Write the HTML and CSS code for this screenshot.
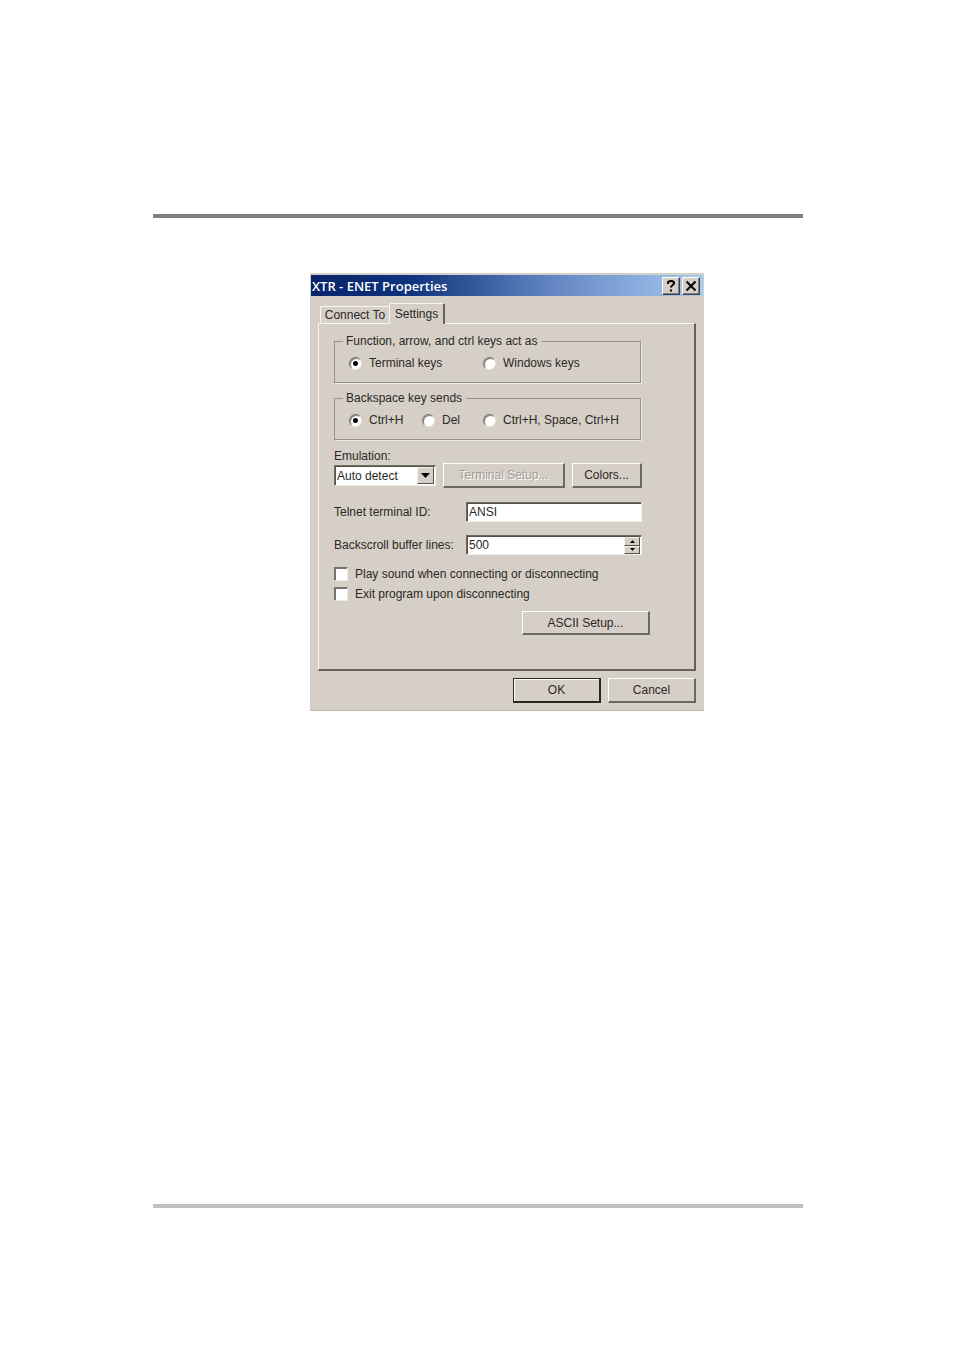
FILE: index.html
```html
<!DOCTYPE html>
<html lang="en">
<head>
	<meta charset="utf-8">
	<title>XTR - ENET Properties</title>
	<link rel="stylesheet" href="styles.css">
</head>
<body>
	<main class="sheet">
		<form class="dialog">
			<header class="titlebar">
				<h1 class="title">XTR - ENET Properties</h1>
				<button type="button" class="title-btn" aria-label="Help">
					<svg width="12" height="12" viewBox="0 0 12 12"><path d="M3 4V3.2C3 1.8 4 1 6 1s3 .8 3 2.2C9 5 6 5 6 7.6M6 9.4v2" fill="none" stroke="#000" stroke-width="2"/></svg>
				</button>
				<button type="button" class="title-btn" aria-label="Close">
					<svg width="12" height="12" viewBox="0 0 12 12"><path d="M1.5 1.500l9 9M10.5 1.500l-9 9" fill="none" stroke="#000" stroke-width="2"/></svg>
				</button>
			</header>

			<nav class="tabs">
				<button type="button" class="tab">Connect To</button>
				<button type="button" class="tab active">Settings</button>
			</nav>

			<section class="panel">
				<fieldset class="group">
					<legend>Function, arrow, and ctrl keys act as</legend>
					<label class="choice wide"><input type="radio" name="keys" checked>Terminal keys</label>
					<label class="choice"><input type="radio" name="keys">Windows keys</label>
				</fieldset>

				<fieldset class="group">
					<legend>Backspace key sends</legend>
					<label class="choice"><input type="radio" name="backspace" checked>Ctrl+H</label>
					<label class="choice"><input type="radio" name="backspace">Del</label>
					<label class="choice"><input type="radio" name="backspace">Ctrl+H, Space, Ctrl+H</label>
				</fieldset>

				<label class="caption" for="emulation">Emulation:</label>
				<div class="emulation">
					<div class="combo">
						<select id="emulation">
							<option>Auto detect</option>
						</select>
						<span class="combo-arrow"><svg width="9" height="5" viewBox="0 0 9 5"><path d="M0 0h9L4.500 5z"/></svg></span>
					</div>
					<button type="button" class="btn setup" disabled>Terminal Setup...</button>
					<button type="button" class="btn colors">Colors...</button>
				</div>

				<div class="field">
					<label for="telnet">Telnet terminal ID:</label>
					<input class="text" id="telnet" type="text" value="ANSI">
				</div>
				<div class="field">
					<label for="lines">Backscroll buffer lines:</label>
					<div class="text spin">
						<input id="lines" type="number" value="500">
						<div class="spin-btns">
							<button type="button" aria-label="More"><svg width="5" height="3" viewBox="0 0 5 3"><path d="M0 3h5L2.500 0z"/></svg></button>
							<button type="button" aria-label="Less"><svg width="5" height="3" viewBox="0 0 5 3"><path d="M0 0h5L2.500 3z"/></svg></button>
						</div>
					</div>
				</div>

				<div class="checks">
					<label class="choice"><input type="checkbox">Play sound when connecting or disconnecting</label>
					<label class="choice"><input type="checkbox">Exit program upon disconnecting</label>
				</div>

				<button type="button" class="btn ascii">ASCII Setup...</button>
			</section>

			<footer class="actions">
				<button type="submit" class="btn default">OK</button>
				<button type="button" class="btn">Cancel</button>
			</footer>
		</form>
	</main>
</body>
</html>
```

FILE: styles.css
```css
* {
	box-sizing: border-box;
	margin: 0;
	padding: 0;
}
body {
	background: #fff;
	color: #2b2825;
	font: 12px/14px "Liberation Sans", Arial, sans-serif;
}
button, input, select {
	font: inherit;
	color: inherit;
}
svg {
	display: block;
}

/* page rules above and below */
.sheet {
	display: flex;
	flex-direction: column;
	align-items: center;
	min-height: 994px;
	margin: 214px 151px 143px 153px;
	padding: 55px 0 0 58px;
	border-top: 4px solid #808080;
	border-bottom: 4px solid #c0c0c0;
}

.dialog {
	width: 394px;
	max-width: 100%;
	padding: 1px 0 7px;
	background: #d6cfc7;
	border: 1px solid #d6cfc7;
	border-bottom-color: #bab5ae;
}
.titlebar {
	display: flex;
	align-items: center;
	height: 21px;
	padding: 0 3px 0 1px;
	background: linear-gradient(to right, #08246b, #0f327c 25%, #6487c4 62%, #a6caf0);
}
.title {
	flex: 1;
	color: #fff;
	font: 600 13px/20px "Open Sans", sans-serif;
}
.title-btn {
	display: flex;
	align-items: center;
	justify-content: center;
	width: 18px;
	height: 18px;
	margin-left: 2px;
	background: #d6cfc7;
	border: 1px solid;
	border-color: #fff #404040 #404040 #fff;
	box-shadow: inset -1px -1px #808080;
}

.tabs {
	display: flex;
	align-items: flex-end;
	height: 27px;
	padding-left: 9px;
}
.tab {
	width: 69px;
	height: 17px;
	background: #d6cfc7;
	border: 1px solid #f8f5f0;
	border-width: 1px 0 0 1px;
	border-radius: 2px 2px 0 0;
}
.tab.active {
	position: relative;
	width: 56px;
	height: 21px;
	margin-bottom: -1px;
	border-right: 2px solid #6a625c;
}

.panel {
	display: flex;
	flex-direction: column;
	margin: 0 7px 7px;
	padding: 10px 52px 34px 15px;
	border: 1px solid #f8f5f0;
	border-right: 2px solid #6a5f59;
	border-bottom: 2px solid #6a5f59;
}
.group {
	display: grid;
	grid-template-columns: 73px 61px 1fr;
	margin: 0 1px 8px 0;
	padding: 8px 0 12px 14px;
	border: 1px solid #99918b;
	box-shadow: 1px 1px #eee9e2;
}
.group legend {
	margin-left: -6px;
	padding: 0 4px 0 3px;
}
.choice {
	display: flex;
	align-items: center;
	gap: 7px;
	white-space: nowrap;
}
.choice.wide {
	grid-column: span 2;
}
input[type="radio"],
input[type="checkbox"] {
	flex: none;
	appearance: none;
	width: 13px;
	height: 13px;
	background: #fff;
	border: 1px solid;
	border-color: #77716c #eee9e2 #eee9e2 #77716c;
}
input[type="radio"] {
	border-radius: 50%;
	box-shadow: inset 1px 1px #8b8580;
}
input[type="checkbox"] {
	width: 14px;
	height: 14px;
	box-shadow: inset 1px 1px #77716c;
}
input[type="radio"]:checked {
	background: radial-gradient(circle, #000 2px, #fff 3px);
}

.caption {
	margin-top: 1px;
}
.emulation {
	display: flex;
	align-items: center;
	margin-bottom: 14px;
}
.combo {
	position: relative;
	width: 102px;
	margin-right: 7px;
}
.combo select {
	display: block;
	appearance: none;
	width: 100%;
	height: 21px;
	padding-left: 2px;
	background: #fff;
	border: 1px solid;
	border-color: #77716c #f4f0ea #f4f0ea #77716c;
	border-radius: 0;
	box-shadow: inset 1px 1px #55504c;
}
.combo-arrow {
	position: absolute;
	top: 2px;
	right: 2px;
	display: flex;
	align-items: center;
	justify-content: center;
	width: 17px;
	height: 17px;
	background: #d6cfc7;
	border: 1px solid;
	border-color: #f4f0ea #55504c #55504c #f4f0ea;
	pointer-events: none;
}
.btn {
	width: 88px;
	height: 25px;
	background: #d6cfc7;
	border: 1px solid #fff;
	border-right: 2px solid #6e6862;
	border-bottom: 2px solid #6e6862;
}
.btn:disabled {
	color: #a39c95;
	text-shadow: 1px 1px #fff;
}
.setup {
	width: 122px;
	margin-right: 7px;
}
.colors {
	flex: 1;
}

.field {
	display: grid;
	grid-template-columns: 132px 1fr;
	align-items: center;
	margin-bottom: 13px;
}
.text {
	width: 100%;
	height: 20px;
	padding: 0 2px;
	background: #fff;
	border: 1px solid;
	border-color: #6e6862 #f4f0ea #f4f0ea #6e6862;
	box-shadow: inset 1px 1px #55504c;
}
.spin {
	display: flex;
	padding: 0 1px 0 2px;
}
.spin input {
	flex: 1;
	min-width: 0;
	appearance: textfield;
	background: none;
	border: 0;
}
.spin-btns {
	display: flex;
	flex-direction: column;
	width: 16px;
	padding-top: 1px;
}
.spin-btns button {
	display: flex;
	flex: 1;
	align-items: center;
	justify-content: center;
	background: #d6cfc7;
	border: 1px solid;
	border-color: #f4f0ea #55504c #55504c #f4f0ea;
}

.checks {
	display: grid;
	gap: 6px;
	margin: -1px 0 10px;
}
.ascii {
	align-self: flex-end;
	width: 128px;
	height: 24px;
	margin-right: -8px;
}
.actions {
	display: flex;
	justify-content: flex-end;
	gap: 7px;
	padding-right: 7px;
}
.default {
	border-color: #2a2725;
	box-shadow: inset 1px 1px #fff;
}
```
